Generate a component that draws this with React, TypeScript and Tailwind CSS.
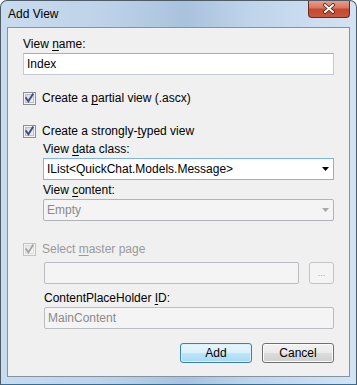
import React from "react";

function CheckBox({ disabled = false }: { disabled?: boolean }) {
  const outer = disabled ? "#c3c3c3" : "#8e8f8f";
  const tick = disabled ? "#a6a6a6" : "#3b4f86";
  const g1 = disabled ? "#e8e8e8" : "#d0d5dc";
  const g2 = disabled ? "#f7f7f7" : "#f6f7f9";
  return (
    <svg width="13" height="13" viewBox="0 0 13 13" className="shrink-0 block">
      <defs>
        <linearGradient id={disabled ? "cbd" : "cbe"} x1="0" y1="0" x2="1" y2="1">
          <stop offset="0" stopColor={g1} />
          <stop offset="1" stopColor={g2} />
        </linearGradient>
      </defs>
      <rect x="0.5" y="0.5" width="12" height="12" fill="#f4f4f4" stroke={outer} />
      <rect x="2.5" y="2.5" width="8" height="8" fill={`url(#${disabled ? "cbd" : "cbe"})`} stroke={disabled ? "#dcdcdc" : "#b9bfc8"} />
      <path d="M3.2 6.2 L5.4 9.2 L9.8 2.2" fill="none" stroke={tick} strokeWidth="1.9" strokeLinecap="square" strokeLinejoin="miter" />
    </svg>
  );
}

function Arrow({ color }: { color: string }) {
  return (
    <svg width="7" height="4" viewBox="0 0 7 4" className="block">
      <path d="M0 0 H7 L3.5 4 Z" fill={color} />
    </svg>
  );
}

export default function App() {
  return (
    <div className="w-[357px] h-[385px] font-['Liberation_Sans',Arial,sans-serif] text-[12px] text-black bg-white">
      <div className="relative w-[357px] h-[385px] rounded-t-[7px] border border-[#4e5b69] border-b-[#2f6f9a] bg-[linear-gradient(90deg,#c9dbee_0%,#bdd2e8_30%,#a9c2dd_52%,#bfd4ea_70%,#d3e3f3_100%)] flex flex-col overflow-hidden">
        {/* title bar */}
        <div className="h-[26px] flex items-center pl-[7px] shrink-0">
          <span className="leading-[15px] text-black">Add View</span>
        </div>
        {/* close button */}
        <div className="absolute right-[6px] -top-px w-[42px] h-[18px] rounded-b-[4px] border border-[#6b2a20] border-t-0 bg-[linear-gradient(180deg,#eba28f_0%,#d9775f_45%,#c24a32_55%,#c8583c_100%)] flex items-center justify-center">
          <svg width="14" height="11" viewBox="0 0 14 11">
            <path d="M3 2 L11 9 M11 2 L3 9" stroke="#4a1c14" strokeWidth="3.6" strokeLinecap="round" />
            <path d="M3 2 L11 9 M11 2 L3 9" stroke="#ffffff" strokeWidth="2" strokeLinecap="round" />
          </svg>
        </div>
        {/* client area */}
        <div className="mx-[6px] mb-[7px] flex-1 border border-[#85929f] bg-[#f0f0f0] flex flex-col px-[15px] pt-[9px]">
          <div className="leading-[15px] h-[15px]">
            View <u className="underline underline-offset-[2px]">n</u>ame:
          </div>
          <div className="mt-px h-[22px] border border-[#c3cad4] border-t-[#abadb3] bg-white flex items-center pl-[3px] leading-[15px]">
            Index
          </div>

          <div className="mt-[16px] h-[15px] flex items-center gap-[6px] leading-[15px]">
            <CheckBox />
            <span>
              Create a <u className="underline underline-offset-[2px]">p</u>artial view (.ascx)
            </span>
          </div>

          <div className="mt-[18px] h-[15px] flex items-center gap-[6px] leading-[15px]">
            <CheckBox />
            <span>
              Create a strongly-<u className="underline underline-offset-[2px]">t</u>yped view
            </span>
          </div>

          <div className="pl-[20px] flex flex-col">
            <div className="mt-[3px] leading-[15px] h-[15px]">
              View <u className="underline underline-offset-[2px]">d</u>ata class:
            </div>
            <div className="mt-px h-[22px] border border-[#7eb4ea] bg-white flex items-center justify-between pl-[3px] pr-[4px] leading-[15px]">
              <span>IList&lt;QuickChat.Models.Message&gt;</span>
              <Arrow color="#000000" />
            </div>
            <div className="mt-[3px] leading-[15px] h-[15px]">
              View <u className="underline underline-offset-[2px]">c</u>ontent:
            </div>
            <div className="mt-px h-[22px] rounded-[2px] border border-[#b0b4b8] bg-[#f4f4f4] flex items-center justify-between pl-[3px] pr-[4px] leading-[15px] text-[#8a8a8a]">
              <span>Empty</span>
              <Arrow color="#a8a8a8" />
            </div>
          </div>

          <div className="mt-[21px] h-[15px] flex items-center gap-[6px] leading-[15px] text-[#9a9a9a]">
            <CheckBox disabled />
            <span>
              Select <u className="underline underline-offset-[2px]">m</u>aster page
            </span>
          </div>

          <div className="pl-[21px] flex flex-col">
            <div className="mt-[5px] flex items-center gap-[10px]">
              <div className="flex-1 h-[22px] rounded-[2px] border border-[#b9bdc1] bg-[#f4f4f4]" />
              <div className="w-[25px] h-[22px] rounded-[3px] border border-[#c1c4c7] bg-[#f4f4f4] flex items-end justify-center pb-[5px] text-[9px] leading-[9px] text-[#a0a0a0]">
                ...
              </div>
            </div>
            <div className="mt-[7px] leading-[15px] h-[15px]">
              ContentPlaceHolder <u className="underline underline-offset-[2px]">I</u>D:
            </div>
            <div className="mt-px h-[22px] rounded-[2px] border border-[#b9bdc1] bg-[#f4f4f4] flex items-center pl-[3px] leading-[15px] text-[#8a8a8a]">
              MainContent
            </div>
          </div>

          <div className="mt-[14px] flex justify-end gap-[10px]">
            <div className="w-[72px] h-[20px] rounded-[3px] border border-[#3c7fb1] bg-[linear-gradient(180deg,#e8f5fc_0%,#d9f0fc_50%,#bee6fd_50%,#a7d9f5_100%)] flex items-center justify-center leading-[15px] shadow-[inset_0_0_0_1px_#d8f1fb]">
              Add
            </div>
            <div className="w-[72px] h-[20px] rounded-[3px] border border-[#707070] bg-[linear-gradient(180deg,#f2f2f2_0%,#ebebeb_50%,#dddddd_50%,#cfcfcf_100%)] flex items-center justify-center leading-[15px] shadow-[inset_0_0_0_1px_#fcfcfc]">
              Cancel
            </div>
          </div>
        </div>
      </div>
    </div>
  );
}
